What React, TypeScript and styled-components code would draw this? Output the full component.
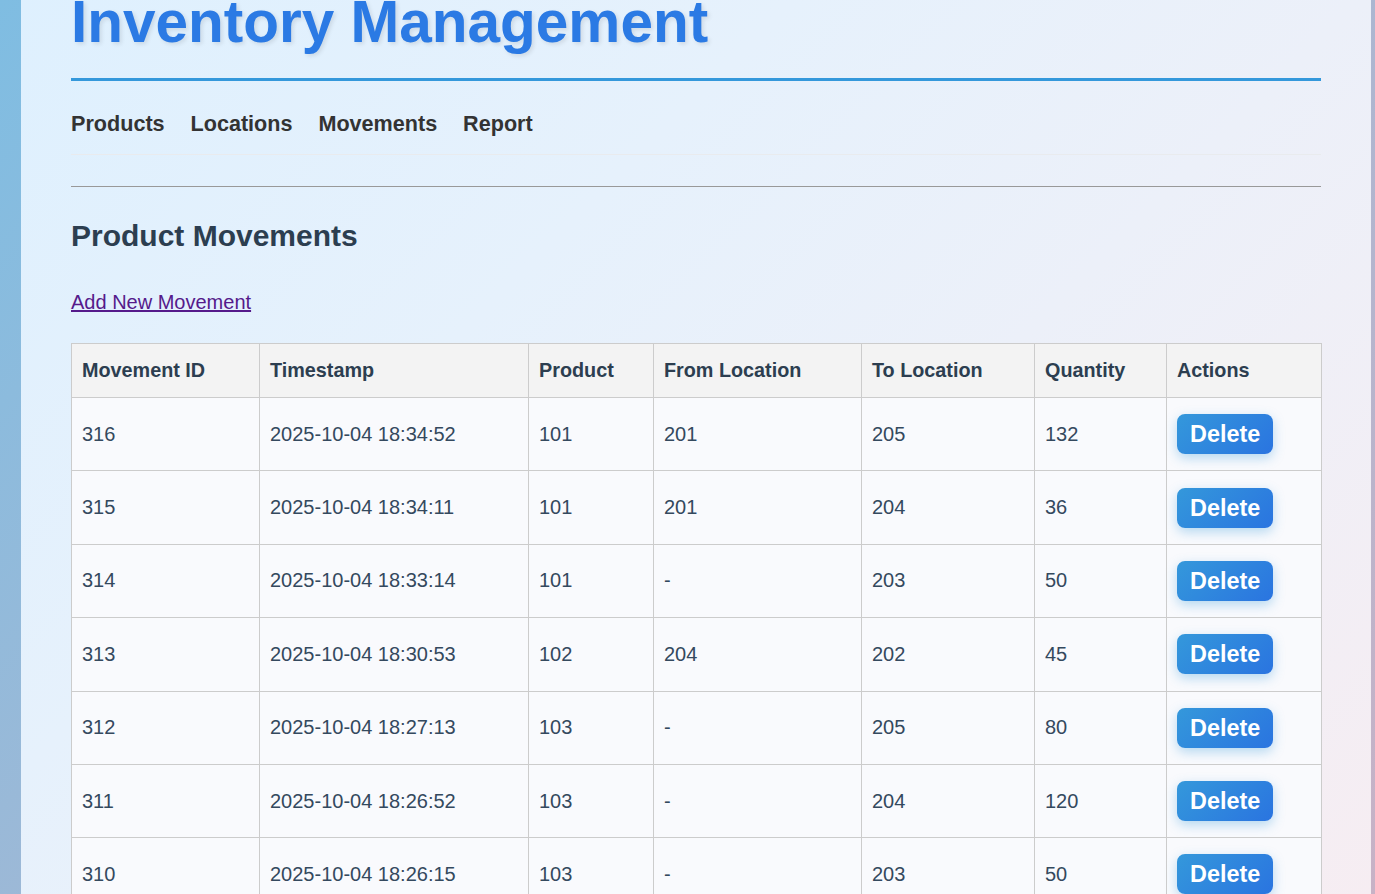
import React from "react";
import styled, { createGlobalStyle } from "styled-components";

const GlobalStyle = createGlobalStyle`
  html, body {
    margin: 0;
    height: 100%;
    overflow: hidden;
  }
  body {
    font-family: "Liberation Sans", Arial, sans-serif;
    font-size: 18px;
    background: linear-gradient(135deg, #7fbde2 0%, #c8b2c6 100%) fixed;
  }
  #root {
    height: 100vh;
    overflow: hidden;
  }
`;

const Page = styled.div`
  box-sizing: border-box;
  width: 1350px;
  margin: -11px 0 0 21px;
  padding: 0 50px 40px;
  min-height: 100vh;
  background: linear-gradient(135deg, #def0fe 0%, #e6f1fc 35%, #ecf0f9 60%, #f6edf2 100%) fixed;
`;

const Title = styled.h1`
  margin: 0;
  padding-bottom: 23px;
  border-bottom: 3px solid #3498db;
  font-size: 58.5px;
  line-height: 66px;
  font-weight: bold;
  color: #2b7ae4;
  text-shadow: 2px 2px 4px rgba(0, 0, 0, 0.1);
`;

const Nav = styled.nav`
  display: flex;
  padding: 30px 0 18px;
  border-bottom: 1px solid #e9ebee;
`;

const NavLink = styled.a`
  font-size: 21.6px;
  line-height: 25px;
  font-weight: bold;
  color: #333;
  text-decoration: none;
  margin-right: 1.2em;
`;

const Divider = styled.hr`
  margin: 31px 0 0;
  height: 0;
  border: 0;
  border-top: 1px solid #999;
`;

const Heading = styled.h2`
  margin: 32px 0 0;
  font-size: 30px;
  line-height: 34.5px;
  font-weight: bold;
  color: #2c3e50;
`;

const LinkLine = styled.p`
  margin: 37.5px 0 0;
  font-size: 20px;
  line-height: 23px;
`;

const AddLink = styled.a`
  color: #551a8b;
  text-decoration: underline;
`;

const Table = styled.table`
  margin-top: 29px;
  width: 100%;
  border-collapse: collapse;
  table-layout: fixed;
`;

const Th = styled.th`
  padding: 15px 10px;
  background: #f3f3f3;
  border: 1px solid #ccc;
  text-align: left;
  font-size: 19.8px;
  line-height: 23px;
  font-weight: bold;
  color: #2c3e50;
`;

const Td = styled.td`
  padding: 16.2px 10px;
  background: #f9fafd;
  border: 1px solid #ccc;
  font-size: 20px;
  line-height: 23px;
  color: #34495e;
  vertical-align: middle;
`;

const DeleteButton = styled.button`
  display: block;
  height: 40px;
  padding: 0 13px;
  border: none;
  border-radius: 8px;
  background: linear-gradient(135deg, #3498db 0%, #2a74e0 100%);
  color: #fff;
  font-family: inherit;
  font-size: 23.4px;
  font-weight: bold;
  line-height: 40px;
  box-shadow: 0 4px 12px rgba(52, 152, 219, 0.35);
  cursor: pointer;
`;

const columns: { label: string; width: number }[] = [
  { label: "Movement ID", width: 188 },
  { label: "Timestamp", width: 269 },
  { label: "Product", width: 125 },
  { label: "From Location", width: 208 },
  { label: "To Location", width: 173 },
  { label: "Quantity", width: 132 },
  { label: "Actions", width: 155 },
];

type Movement = {
  id: number;
  ts: string;
  product: string;
  from: string;
  to: string;
  qty: number;
};

const movements: Movement[] = [
  { id: 316, ts: "2025-10-04 18:34:52", product: "101", from: "201", to: "205", qty: 132 },
  { id: 315, ts: "2025-10-04 18:34:11", product: "101", from: "201", to: "204", qty: 36 },
  { id: 314, ts: "2025-10-04 18:33:14", product: "101", from: "-", to: "203", qty: 50 },
  { id: 313, ts: "2025-10-04 18:30:53", product: "102", from: "204", to: "202", qty: 45 },
  { id: 312, ts: "2025-10-04 18:27:13", product: "103", from: "-", to: "205", qty: 80 },
  { id: 311, ts: "2025-10-04 18:26:52", product: "103", from: "-", to: "204", qty: 120 },
  { id: 310, ts: "2025-10-04 18:26:15", product: "103", from: "-", to: "203", qty: 50 },
];

export default function App() {
  return (
    <>
      <GlobalStyle />
      <Page>
        <Title>Inventory Management</Title>
        <Nav>
          <NavLink href="#">Products</NavLink>
          <NavLink href="#">Locations</NavLink>
          <NavLink href="#">Movements</NavLink>
          <NavLink href="#">Report</NavLink>
        </Nav>
        <Divider />
        <Heading>Product Movements</Heading>
        <LinkLine>
          <AddLink href="#">Add New Movement</AddLink>
        </LinkLine>
        <Table>
          <colgroup>
            {columns.map((c) => (
              <col key={c.label} style={{ width: c.width }} />
            ))}
          </colgroup>
          <thead>
            <tr>
              {columns.map((c) => (
                <Th key={c.label}>{c.label}</Th>
              ))}
            </tr>
          </thead>
          <tbody>
            {movements.map((m) => (
              <tr key={m.id}>
                <Td>{m.id}</Td>
                <Td>{m.ts}</Td>
                <Td>{m.product}</Td>
                <Td>{m.from}</Td>
                <Td>{m.to}</Td>
                <Td>{m.qty}</Td>
                <Td>
                  <DeleteButton>Delete</DeleteButton>
                </Td>
              </tr>
            ))}
          </tbody>
        </Table>
      </Page>
    </>
  );
}
